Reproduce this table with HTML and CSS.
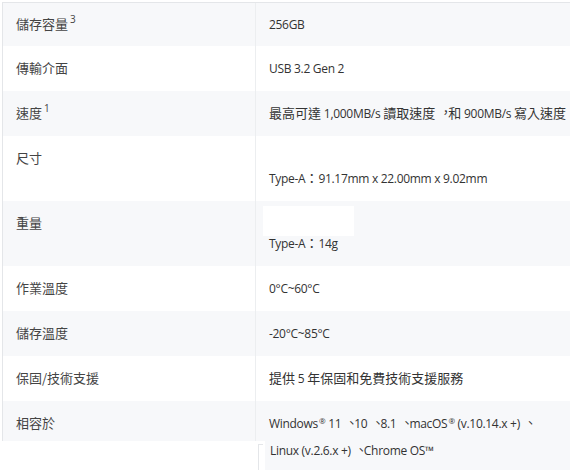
FILE: index.html
```html
<!DOCTYPE html>
<html lang="zh-TW">
<head>
<meta charset="utf-8">
<title>規格</title>
<link rel="stylesheet" href="styles.css">
</head>
<body>
<div class="page">
  <div class="spec">
    <div class="row alt">
      <div class="label"><span class="zh">儲存容量</span><sup>3</sup></div>
      <div class="value">256GB</div>
    </div>
    <div class="row">
      <div class="label"><span class="zh">傳輸介面</span></div>
      <div class="value">USB 3.2 Gen 2</div>
    </div>
    <div class="row alt">
      <div class="label"><span class="zh">速度</span><sup>1</sup></div>
      <div class="value"><span class="zh">最高可達</span> 1,000MB/s <span class="zh">讀取速度<span class="cp">，</span>和</span> 900MB/s <span class="zh">寫入速度</span></div>
    </div>
    <div class="row tall">
      <div class="label"><span class="zh">尺寸</span></div>
      <div class="value"><div class="blank"></div><div class="line">Type-A<span class="zh">：</span>91.17mm x 22.00mm x 9.02mm</div></div>
    </div>
    <div class="row alt tall">
      <div class="label"><span class="zh">重量</span></div>
      <div class="value"><div class="white-box"></div><div class="line tight">Type-A<span class="zh">：</span>14g</div></div>
    </div>
    <div class="row">
      <div class="label"><span class="zh">作業溫度</span></div>
      <div class="value">0°C~60°C</div>
    </div>
    <div class="row alt">
      <div class="label"><span class="zh">儲存溫度</span></div>
      <div class="value">-20°C~85°C</div>
    </div>
    <div class="row">
      <div class="label"><span class="zh">保固/技術支援</span></div>
      <div class="value"><span class="zh">提供</span> 5 <span class="zh">年保固和免費技術支援服務</span></div>
    </div>
    <div class="row alt cut">
      <div class="label"><span class="zh">相容於</span></div>
      <div class="value">Windows<sup class="reg">®</sup> 11<span class="zh cp">、</span>10<span class="zh cp">、</span>8.1<span class="zh cp">、</span>macOS<sup class="reg">®</sup> (v.10.14.x +)<span class="zh cp">、</span></div>
    </div>
  </div>
  <div class="fragment">
    <div class="frag-gap"></div>
    <div class="frag-tick"></div>
    <div class="frag-cell">Linux (v.2.6.x +)<span class="zh cp">、</span>Chrome OS™</div>
  </div>
</div>
</body>
</html>
```
FILE: styles.css
```css
* { box-sizing: border-box; }
html, body {
  margin: 0;
  padding: 0;
  background: #ffffff;
  overflow: hidden;
}
body {
  font-family: "Open Sans", "Noto Sans CJK TC", sans-serif;
  font-size: 12px;
  letter-spacing: -0.3px;
  color: #333333;
}
.zh {
  font-family: "Noto Sans CJK TC", sans-serif;
  font-size: 13px;
  line-height: 1;
  letter-spacing: 0;
}
.cp {
  position: relative;
  left: 4px;
  top: -1px;
}
.page {
  width: 570px;
  height: 470px;
  overflow: hidden;
}
.spec {
  margin: 2px 0 0 2px;
  width: 620px;
  border-top: 1px solid #e4e6e9;
  border-left: 1px solid #e4e6e9;
}
.row {
  display: grid;
  grid-template-columns: 253px 1fr;
  background: #ffffff;
}
.row.alt { background: #f7f8fa; }
.label {
  padding: 12px 13px;
  line-height: 21px;
  height: 45px;
  color: #444444;
  border-right: 1px solid #eceef0;
}
.value {
  padding: 12px 13px;
  line-height: 21px;
  height: 45px;
}
.row:first-child .label,
.row:first-child .value { padding-top: 11px; height: 43px; }
.row.tall .label,
.row.tall .value { height: 65px; }
sup {
  font-size: 10px;
  line-height: 0;
  vertical-align: 6px;
  margin-left: 2px;
}
sup.reg {
  font-size: 8px;
  vertical-align: 4px;
  margin-left: 1px;
}
.blank { height: 20px; }
.white-box {
  width: 91px;
  height: 30px;
  margin: -7px 0 0 -6px;
  background: #ffffff;
}
.line.tight { margin-top: -3px; }
.row.cut .label,
.row.cut .value { height: 40px; }
.fragment {
  display: flex;
  height: 29px;
}
.frag-gap {
  width: 258px;
  background: #ffffff;
}
.frag-tick {
  width: 7px;
  margin-top: 3px;
  background: #ffffff;
  border-left: 1px solid #e4e6e9;
  position: relative;
}
.frag-tick::before {
  content: "";
  position: absolute;
  top: 0;
  left: 0;
  width: 4px;
  height: 1px;
  background: #e4e6e9;
}
.frag-cell {
  flex: 1;
  background: #f7f8fa;
  padding-left: 5px;
  line-height: 19px;
}
```
